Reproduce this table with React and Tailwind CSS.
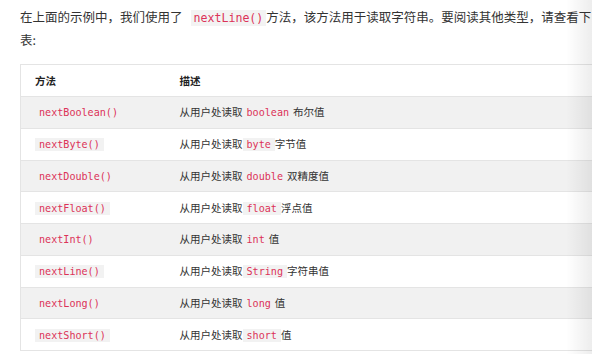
import React from 'react';

const rows = [
  { method: 'nextBoolean()', type: 'boolean', desc: '布尔值' },
  { method: 'nextByte()', type: 'byte', desc: '字节值' },
  { method: 'nextDouble()', type: 'double', desc: '双精度值' },
  { method: 'nextFloat()', type: 'float', desc: '浮点值' },
  { method: 'nextInt()', type: 'int', desc: '值' },
  { method: 'nextLine()', type: 'String', desc: '字符串值' },
  { method: 'nextLong()', type: 'long', desc: '值' },
  { method: 'nextShort()', type: 'short', desc: '值' },
];

const cjk = "font-['Noto_Sans_CJK_SC','Noto_Sans',sans-serif]";
const mono = "font-['DejaVu_Sans_Mono','Liberation_Mono',monospace]";

function Code({ children, shaded }) {
  return (
    <code
      className={`${mono} text-[10.1px] text-[#dc3258] px-[4px] py-[1px] ${
        shaded ? 'bg-transparent' : 'bg-[#f2f2f2]'
      }`}
    >
      {children}
    </code>
  );
}

export default function App() {
  return (
    <div className={`relative w-[592px] h-[354px] overflow-hidden bg-white ${cjk} text-[#333]`}>
      <div className="pl-[20px] pt-[6px] w-[600px]">
        <p className="text-[12.5px] leading-[21px] w-[575px]">
          在上面的示例中，我们使用了
          <code className={`${mono} text-[11.6px] text-[#dc3258] bg-[#f3f3f3] px-[3px] py-[1px] ml-[8px]`}>
            nextLine()
          </code>
          方法，该方法用于读取字符串。要阅读其他类型，请查看下表:
        </p>

        <table className="mt-[14px] w-[600px] border border-[#e4e4e4] border-collapse text-[10.5px]">
          <thead>
            <tr className="h-[32px] bg-white border-b border-[#e4e4e4]">
              <th className="w-[145px] pl-[14px] text-left font-bold text-[#222]">方法</th>
              <th className="pl-[14px] text-left font-bold text-[#222]">描述</th>
            </tr>
          </thead>
          <tbody>
            {rows.map((row, i) => {
              const shaded = i % 2 === 0;
              return (
                <tr
                  key={row.method}
                  className={`h-[31.75px] border-b border-[#e4e4e4] ${shaded ? 'bg-[#f1f1f1]' : 'bg-white'}`}
                >
                  <td className="pl-[14px]">
                    <Code shaded={shaded}>{row.method}</Code>
                  </td>
                  <td className="pl-[14px]">
                    从用户处读取<Code shaded={shaded}>{row.type}</Code>{row.desc}
                  </td>
                </tr>
              );
            })}
          </tbody>
        </table>
      </div>

      {/* scroll shadow on the right edge */}
      <div className="pointer-events-none absolute top-0 right-0 h-full w-[26px] bg-gradient-to-r from-transparent to-[rgba(0,0,0,0.07)]" />
    </div>
  );
}
